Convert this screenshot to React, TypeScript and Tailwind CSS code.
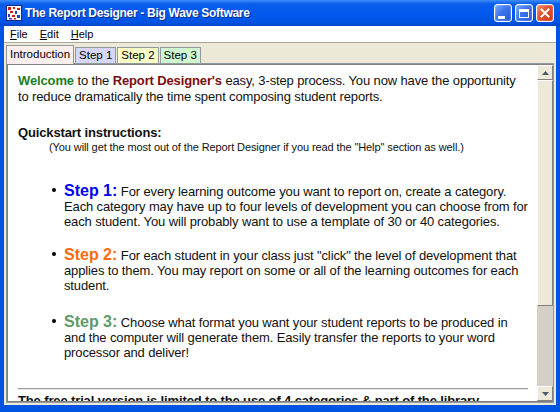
// The Report Designer — intro tab, XP-style window

function WinButton({ kind }: { kind: 'min' | 'max' | 'close' }) {
  const base =
    'flex h-[18px] w-[18px] items-center justify-center rounded-[3px] border border-white shadow-[inset_0_0_2px_rgba(255,255,255,0.6)]';
  if (kind === 'close') {
    return (
      <div className={`${base} bg-[linear-gradient(135deg,#F0906A_0%,#E0502A_45%,#C8381A_100%)]`}>
        <svg width="10" height="10" viewBox="0 0 10 10" aria-hidden>
          <path d="M1.5 1.5l7 7M8.5 1.5l-7 7" stroke="white" strokeWidth="2" strokeLinecap="square" />
        </svg>
      </div>
    );
  }
  return (
    <div className={`${base} bg-[linear-gradient(135deg,#7AA8FA_0%,#3C74EE_45%,#2456DA_100%)]`}>
      {kind === 'min' ? (
        <div className="mt-[8px] h-[3px] w-[7px] -translate-x-[2px] bg-white" />
      ) : (
        <div className="h-[9px] w-[10px] border border-t-[3px] border-white" />
      )}
    </div>
  );
}

function AppIcon() {
  return (
    <svg width="16" height="16" viewBox="0 0 16 16" aria-hidden className="flex-none">
      <rect x="0.5" y="0.5" width="15" height="15" fill="#ffffff" stroke="#1a2a8a" />
      <rect x="2" y="2" width="3" height="3" fill="#d21c1c" />
      <rect x="7" y="2" width="2" height="2" fill="#d21c1c" />
      <rect x="11" y="3" width="3" height="2" fill="#d21c1c" />
      <rect x="4" y="6" width="3" height="2" fill="#d21c1c" />
      <rect x="9" y="6" width="2" height="3" fill="#1f3fd0" />
      <rect x="2" y="9" width="2" height="3" fill="#1f3fd0" />
      <rect x="6" y="10" width="3" height="2" fill="#d21c1c" />
      <rect x="11" y="10" width="3" height="3" fill="#1f3fd0" />
      <rect x="3" y="13" width="3" height="1.5" fill="#1f3fd0" />
      <rect x="8" y="13" width="2" height="1.5" fill="#d21c1c" />
    </svg>
  );
}

function Tab({ label, bg, active }: { label: string; bg: string; active?: boolean }) {
  return (
    <div
      className={`flex items-center justify-center border border-b-0 border-[#919b9c] text-[11.5px] text-black ${bg} ${
        active ? 'relative -mb-px h-[19px] px-[3px]' : 'h-[16px] px-[3px]'
      }`}
    >
      {label}
    </div>
  );
}

function ScrollArrow({ up }: { up?: boolean }) {
  return (
    <div className="flex h-[15px] w-[16px] flex-none items-center justify-center border border-t-white border-l-white border-r-[#808080] border-b-[#808080] bg-[#ECE9D8]">
      <svg width="7" height="4" viewBox="0 0 7 4" aria-hidden>
        {up ? <path d="M3.5 0L7 4H0z" fill="#4d5a6a" /> : <path d="M0 0h7L3.5 4z" fill="#4d5a6a" />}
      </svg>
    </div>
  );
}

function Step({
  label,
  color,
  lines,
  className,
}: {
  label: string;
  color: string;
  lines: string[];
  className: string;
}) {
  return (
    <div className={`ml-[34px] flex ${className}`}>
      <div className="w-[12px] flex-none pt-[5px]">
        <div className="h-[4px] w-[4px] rounded-full bg-black" />
      </div>
      <div className="whitespace-nowrap text-[13px] leading-[15px] tracking-[-0.13px] text-[#111]">
        <span className={`text-[16px] font-bold leading-none tracking-normal ${color}`}>{label}</span> {lines[0]}
        <br />
        {lines[1]}
        <br />
        {lines[2]}
      </div>
    </div>
  );
}

export default function App() {
  return (
    <div className="flex h-[412px] w-[560px] flex-col overflow-hidden bg-[#0054E3] font-['Liberation_Sans',Arial,sans-serif]">
      {/* title bar */}
      <div className="flex h-[26px] flex-none items-center bg-[linear-gradient(to_bottom,#3D8DF8_0%,#0A5EEB_15%,#0058EE_50%,#0054E3_85%,#0044C8_100%)] pl-[6px] pr-[6px]">
        <AppIcon />
        <span className="ml-[3px] text-[12px] font-bold tracking-[-0.3px] text-white [text-shadow:1px_1px_0_#0a2a8a]">
          The Report Designer - Big Wave Software
        </span>
        <div className="ml-auto flex gap-[3px]">
          <WinButton kind="min" />
          <WinButton kind="max" />
          <WinButton kind="close" />
        </div>
      </div>

      {/* frame */}
      <div className="mx-[4px] mb-[7px] flex min-h-0 flex-1 flex-col bg-[#ECE9D8]">
        {/* menu */}
        <div className="flex h-[17px] flex-none items-center gap-[12px] border-b border-[#aca899] bg-white pl-[6px] text-[11px] text-black">
          <span><span className="underline">F</span>ile</span>
          <span><span className="underline">E</span>dit</span>
          <span><span className="underline">H</span>elp</span>
        </div>

        {/* tabs */}
        <div className="flex h-[20px] flex-none items-end gap-[1px] pl-[2px]">
          <Tab label="Introduction" bg="bg-[#FDEEEE]" active />
          <Tab label="Step 1" bg="bg-[#D6D6F8]" />
          <Tab label="Step 2" bg="bg-[#FCFCC8]" />
          <Tab label="Step 3" bg="bg-[#D2F5D2]" />
        </div>

        {/* panel */}
        <div className="mx-[2px] flex min-h-0 flex-1 border border-[#919b9c] bg-white">
          <div className="flex min-h-0 flex-1 border border-r-0 border-[#808080]">
            <div className="min-h-0 flex-1 overflow-hidden pl-[10px] pt-[8px] text-[13px] leading-[16px] tracking-[-0.13px] text-[#111]">
              <p className="whitespace-nowrap">
                <span className="font-bold text-[#1E7D1E]">Welcome</span> to the{' '}
                <span className="font-bold text-[#7A0E0E]">Report Designer's</span> easy, 3-step process. You now have the opportunity
                <br />
                to reduce dramatically the time spent composing student reports.
              </p>
              <p className="mt-[20px] font-bold">Quickstart instructions:</p>
              <p className="ml-[31px] whitespace-nowrap text-[11px] leading-[12px] tracking-[-0.1px]">
                (You will get the most out of the Report Designer if you read the "Help" section as well.)
              </p>

              <Step
                className="mt-[30px]"
                label="Step 1:"
                color="text-[#0000F0]"
                lines={[
                  'For every learning outcome you want to report on, create a category.',
                  'Each category may have up to four levels of development you can choose from for',
                  'each student. You will probably want to use a template of 30 or 40 categories.',
                ]}
              />
              <Step
                className="mt-[18px]"
                label="Step 2:"
                color="text-[#FF6A10]"
                lines={[
                  'For each student in your class just "click" the level of development that',
                  'applies to them. You may report on some or all of the learning outcomes for each',
                  'student.',
                ]}
              />
              <Step
                className="mt-[21px]"
                label="Step 3:"
                color="text-[#5F9A6A]"
                lines={[
                  'Choose what format you want your student reports to be produced in',
                  'and the computer will generate them. Easily transfer the reports to your word',
                  'processor and deliver!',
                ]}
              />

              <div className="mr-[9px] mt-[28px] border-t border-b border-t-[#9a9a9a] border-b-[#e6e6e6]" />
              <p className="mt-[3px] whitespace-nowrap font-bold">
                The free trial version is limited to the use of 4 categories &amp; part of the library
              </p>
            </div>

            {/* scrollbar */}
            <div className="flex w-[16px] flex-none flex-col bg-[#D4D0C8]">
              <ScrollArrow up />
              <div className="h-[226px] flex-none border border-t-white border-l-white border-r-[#808080] border-b-[#808080] bg-[#ECE9D8]" />
              <div className="flex-1" />
              <ScrollArrow />
            </div>
          </div>
        </div>
        <div className="h-[2px] flex-none" />
      </div>
    </div>
  );
}
